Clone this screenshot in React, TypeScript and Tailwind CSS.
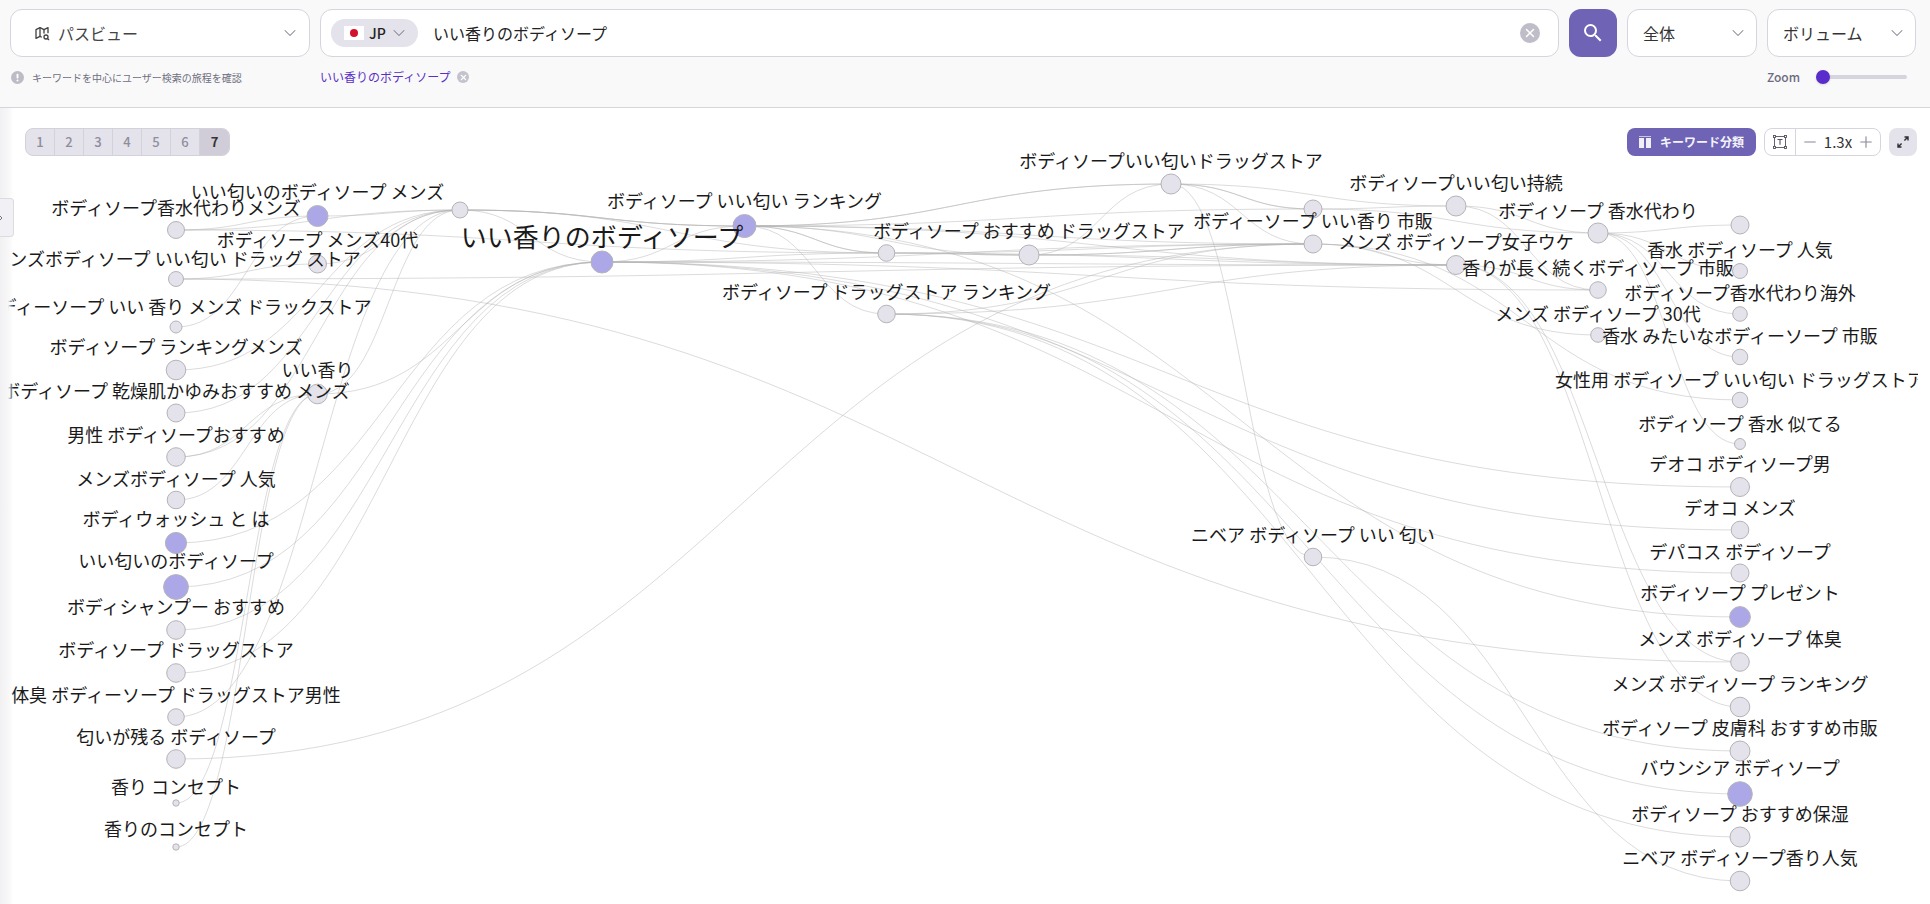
import { ChevronDown, ChevronRight, Minus, Plus, X } from 'lucide-react';
import { MdSearch } from 'react-icons/md';
import { TbMapSearch } from 'react-icons/tb';

type GraphNode = {
  id: string;
  x: number;
  y: number;
  r: number;
  label?: string;
  labelY?: number;
  hot?: boolean;
  main?: boolean;
};

const COL = [176, 317.5, 460, 602, 744.5, 886.5, 1029, 1171, 1313, 1456, 1598, 1740];

const nodes: GraphNode[] = [
  { id: 'l1', x: COL[0], y: 230, r: 8.5, label: 'ボディソープ香水代わりメンズ', labelY: 208 },
  { id: 'l2', x: COL[0], y: 279, r: 7.5, label: 'メンズボディソープ いい匂い ドラッグ ストア', labelY: 259 },
  { id: 'l3', x: COL[0], y: 327, r: 6, label: 'ボディーソープ いい 香り メンズ ドラックストア', labelY: 307 },
  { id: 'l4', x: COL[0], y: 370, r: 9.8, label: 'ボディソープ ランキングメンズ', labelY: 347 },
  { id: 'l5', x: COL[0], y: 413, r: 9, label: 'ボディソープ 乾燥肌かゆみおすすめ メンズ', labelY: 391 },
  { id: 'l6', x: COL[0], y: 457, r: 9.3, label: '男性 ボディソープおすすめ', labelY: 435 },
  { id: 'l7', x: COL[0], y: 500, r: 8.8, label: 'メンズボディソープ 人気', labelY: 479 },
  { id: 'l8', x: COL[0], y: 543, r: 10.6, label: 'ボディウォッシュ と は', labelY: 519, hot: true },
  { id: 'l9', x: COL[0], y: 587, r: 12.4, label: 'いい匂いのボディソープ', labelY: 561, hot: true },
  { id: 'l10', x: COL[0], y: 630, r: 9.3, label: 'ボディシャンプー おすすめ', labelY: 607 },
  { id: 'l11', x: COL[0], y: 673, r: 9.3, label: 'ボディソープ ドラッグストア', labelY: 650 },
  { id: 'l12', x: COL[0], y: 717, r: 8.3, label: '体臭 ボディーソープ ドラッグストア男性', labelY: 695 },
  { id: 'l13', x: COL[0], y: 759, r: 9.3, label: '匂いが残る ボディソープ', labelY: 737 },
  { id: 'l14', x: COL[0], y: 803, r: 3.2, label: '香り コンセプト', labelY: 787 },
  { id: 'l15', x: COL[0], y: 847, r: 3.2, label: '香りのコンセプト', labelY: 829 },
  { id: 'c1', x: COL[1], y: 216, r: 10.5, label: 'いい匂いのボディソープ メンズ', labelY: 192, hot: true },
  { id: 'c2', x: COL[1], y: 264, r: 9, label: 'ボディソープ メンズ40代', labelY: 240 },
  { id: 'c3', x: COL[1], y: 394, r: 9.8, label: 'いい香り', labelY: 370 },
  { id: 'x', x: COL[2], y: 210, r: 8 },
  { id: 'a', x: COL[3], y: 262, r: 11, label: 'いい香りのボディソープ', labelY: 236, hot: true, main: true },
  { id: 'b', x: COL[4], y: 226, r: 11.5, label: 'ボディソープ いい匂い ランキング', labelY: 201, hot: true },
  { id: 'p', x: COL[5], y: 253, r: 8.3 },
  { id: 'd', x: COL[5], y: 314, r: 8.8, label: 'ボディソープ ドラッグストア ランキング', labelY: 292 },
  { id: 'c', x: COL[6], y: 255, r: 10, label: 'ボディソープ おすすめ ドラッグストア', labelY: 231 },
  { id: 'e', x: COL[7], y: 184, r: 10, label: 'ボディソープいい匂いドラッグストア', labelY: 161 },
  { id: 'f', x: COL[8], y: 209, r: 9 },
  { id: 'g', x: COL[8], y: 244, r: 9, label: 'ボディーソープ いい香り 市販', labelY: 221 },
  { id: 'n', x: COL[8], y: 557, r: 8.8, label: 'ニベア ボディソープ いい 匂い', labelY: 535 },
  { id: 'i', x: COL[9], y: 206, r: 10, label: 'ボディソープいい匂い持続', labelY: 183 },
  { id: 'h', x: COL[9], y: 265, r: 9.5, label: 'メンズ ボディソープ女子ウケ', labelY: 242 },
  { id: 'j', x: COL[10], y: 233, r: 10, label: 'ボディソープ 香水代わり', labelY: 211 },
  { id: 'k', x: COL[10], y: 290, r: 8.3, label: '香りが長く続くボディソープ 市販', labelY: 268 },
  { id: 'm', x: COL[10], y: 335, r: 7.3, label: 'メンズ ボディソープ 30代', labelY: 314 },
  { id: 'r1', x: COL[11], y: 225, r: 9 },
  { id: 'r2', x: COL[11], y: 271, r: 7.5, label: '香水 ボディソープ 人気', labelY: 250 },
  { id: 'r3', x: COL[11], y: 314, r: 7.3, label: 'ボディソープ香水代わり海外', labelY: 293 },
  { id: 'r4', x: COL[11], y: 357, r: 7.8, label: '香水 みたいなボディーソープ 市販', labelY: 336 },
  { id: 'r5', x: COL[11], y: 400, r: 7.8, label: '女性用 ボディソープ いい匂い ドラッグストア', labelY: 380 },
  { id: 'r6', x: COL[11], y: 444, r: 5.5, label: 'ボディソープ 香水 似てる', labelY: 424 },
  { id: 'r7', x: COL[11], y: 487, r: 9.5, label: 'デオコ ボディソープ男', labelY: 464 },
  { id: 'r8', x: COL[11], y: 530, r: 8.8, label: 'デオコ メンズ', labelY: 508 },
  { id: 'r9', x: COL[11], y: 573, r: 9, label: 'デパコス ボディソープ', labelY: 552 },
  { id: 'r10', x: COL[11], y: 617, r: 10.4, label: 'ボディソープ プレゼント', labelY: 593, hot: true },
  { id: 'r11', x: COL[11], y: 662, r: 9.3, label: 'メンズ ボディソープ 体臭', labelY: 639 },
  { id: 'r12', x: COL[11], y: 707, r: 9.8, label: 'メンズ ボディソープ ランキング', labelY: 684 },
  { id: 'r13', x: COL[11], y: 751, r: 10, label: 'ボディソープ 皮膚科 おすすめ市販', labelY: 728 },
  { id: 'r14', x: COL[11], y: 794, r: 12.3, label: 'バウンシア ボディソープ', labelY: 768, hot: true },
  { id: 'r15', x: COL[11], y: 837, r: 10, label: 'ボディソープ おすすめ保湿', labelY: 814 },
  { id: 'r16', x: COL[11], y: 881, r: 9.8, label: 'ニベア ボディソープ香り人気', labelY: 858 },
];

const edges: [string, string][] = [
  ['l1', 'c1'], ['l1', 'p'], ['l1', 'x'],
  ['l2', 'c2'], ['l2', 'h'], ['l2', 'r11'],
  ['l3', 'c1'],
  ['l4', 'x'], ['l5', 'x'], ['l6', 'c3'], ['l7', 'c3'],
  ['l6', 'x'], ['l12', 'x'], ['l14', 'c3'], ['l15', 'c3'],
  ['l8', 'a'], ['l9', 'a'], ['l10', 'a'], ['l11', 'a'],
  ['l13', 'g'],
  ['c1', 'x'], ['c2', 'x'], ['c3', 'x'], ['c3', 'a'],
  ['x', 'a'], ['x', 'b'], ['x', 'b'], ['x', 'b'], ['x', 'p'],
  ['a', 'b'], ['a', 'p'], ['a', 'h'], ['a', 'k'], ['a', 'g'], ['a', 'r7'], ['a', 'r8'], ['a', 'r9'],
  ['b', 'e'], ['b', 'e'], ['b', 'p'], ['b', 'p'], ['b', 'c'], ['b', 'd'], ['b', 'g'], ['b', 'h'], ['b', 'f'], ['b', 'r10'],
  ['p', 'c'], ['p', 'c'], ['p', 'g'], ['p', 'h'],
  ['d', 'g'], ['d', 'h'], ['d', 'r13'], ['d', 'r14'], ['d', 'r15'],
  ['c', 'e'], ['c', 'g'], ['c', 'g'], ['c', 'h'],
  ['e', 'f'], ['e', 'f'], ['e', 'i'], ['e', 'g'], ['e', 'n'],
  ['f', 'i'], ['f', 'j'],
  ['g', 'h'], ['g', 'r5'], ['g', 'm'],
  ['i', 'j'], ['i', 'k'],
  ['h', 'k'], ['h', 'r11'], ['h', 'r12'],
  ['j', 'r1'], ['j', 'r2'], ['j', 'r3'], ['j', 'r4'], ['j', 'r6'],
  ['n', 'r16'],
];

const byId = Object.fromEntries(nodes.map((n) => [n.id, n]));

function linkPath(sourceId: string, targetId: string) {
  const s = byId[sourceId];
  const t = byId[targetId];
  const mid = (s.x + t.x) / 2;
  return `M${s.x},${s.y}C${mid},${s.y} ${mid},${t.y} ${t.x},${t.y}`;
}

function KeywordGraph() {
  return (
    <svg className="block h-[796px] w-[1910px]" viewBox="8 108 1910 796">
      <g fill="none" stroke="#b4b4b4" strokeWidth="0.6" strokeOpacity="0.8">
        {edges.map(([s, t], i) => (
          <path key={i} d={linkPath(s, t)} />
        ))}
      </g>
      {nodes.map((n) => (
        <circle
          key={n.id}
          cx={n.x}
          cy={n.y}
          r={n.r}
          fill={n.hot ? '#aca8e8' : '#e4e2ea'}
          stroke="#b4b4b8"
          strokeWidth="1"
        />
      ))}
      {nodes.map((n) =>
        n.label ? (
          <text
            key={n.id}
            x={n.x}
            y={(n.labelY ?? 0) - 1}
            textAnchor="middle"
            dominantBaseline="central"
            fill="#1a1a1a"
            fontSize={n.main ? 26 : 18}
          >
            {n.label}
          </text>
        ) : null,
      )}
    </svg>
  );
}

function SelectBox({ className, children }: { className: string; children: React.ReactNode }) {
  return (
    <div className={`flex h-12 items-center justify-between rounded-xl border border-[#d6d4df] bg-white ${className}`}>
      {children}
      <ChevronDown className="h-5 w-5 text-[#85838f]" strokeWidth={1.25} />
    </div>
  );
}

function InfoDot() {
  return (
    <svg className="h-[13px] w-[13px]" viewBox="0 0 14 14">
      <circle cx="7" cy="7" r="7" fill="#bdbbc6" />
      <rect x="6" y="3" width="2" height="5" rx="0.8" fill="#fff" />
      <circle cx="7" cy="10.2" r="1.1" fill="#fff" />
    </svg>
  );
}

function TextSizeIcon() {
  return (
    <svg className="h-[14px] w-[14px]" viewBox="0 0 14 14" fill="none" stroke="#55535f" strokeWidth="0.9">
      <rect x="1.5" y="1.5" width="11" height="11" />
      <rect x="0.5" y="0.5" width="2" height="2" fill="#fff" />
      <rect x="11.5" y="0.5" width="2" height="2" fill="#fff" />
      <rect x="0.5" y="11.5" width="2" height="2" fill="#fff" />
      <rect x="11.5" y="11.5" width="2" height="2" fill="#fff" />
      <path d="M4.5 4.5h5M7 4.5v5.2" strokeWidth="1.1" />
    </svg>
  );
}

function ColumnsIcon() {
  return (
    <svg className="h-3 w-3" viewBox="0 0 12 12">
      <rect x="0" y="0" width="12" height="1" fill="#c9c5e6" />
      <rect x="0" y="2" width="5" height="10" fill="#f0eff8" />
      <rect x="7" y="2" width="5" height="10" fill="#f0eff8" />
    </svg>
  );
}

function ExpandIcon() {
  return (
    <svg className="h-3 w-3" viewBox="0 0 12 12" fill="none" stroke="#2f2f35" strokeWidth="1.4">
      <path d="M7.5 1H11V4.5M11 1L7.4 4.6" />
      <path d="M4.5 11H1V7.5M1 11L4.6 7.4" />
    </svg>
  );
}

export default function App() {
  return (
    <div className="flex h-[904px] w-[1930px] flex-col overflow-hidden bg-white font-['Noto_Sans_CJK_JP','Noto_Sans',sans-serif] text-[#222]">
      <header className="h-[108px] shrink-0 border-b border-[#d6d5dc] bg-[#f9f9f9] pl-[10px] pr-[13px] pt-[9px]">
        <div className="flex gap-[10px]">
          <SelectBox className="w-[300px] pl-[23px] pr-[9px]">
            <div className="flex items-center gap-2 text-[#444]">
              <TbMapSearch className="h-4 w-4" />
              <span className="text-base">パスビュー</span>
            </div>
          </SelectBox>
          <div className="flex h-12 w-[1239px] items-center rounded-xl border border-[#d6d4df] bg-white pl-[10px] pr-[18px]">
            <div className="flex h-7 w-[87px] items-center rounded-full bg-[#e4e2ea] pl-[13px]">
              <div className="flex h-[14px] w-5 items-center justify-center bg-white">
                <div className="h-2 w-2 rounded-full bg-[#d3112c]" />
              </div>
              <span className="ml-[5px] text-sm font-medium text-[#222]">JP</span>
              <ChevronDown className="ml-[3px] h-5 w-5 text-[#85838f]" strokeWidth={1.25} />
            </div>
            <span className="ml-[15px] flex-1 text-base">いい香りのボディソープ</span>
            <div className="flex h-5 w-5 items-center justify-center rounded-full bg-[#bfbdc8]">
              <X className="h-[14px] w-[14px] text-white" strokeWidth={2.5} />
            </div>
          </div>
          <div className="flex h-12 w-12 items-center justify-center rounded-xl bg-[#6e63b5]">
            <MdSearch className="h-6 w-6 text-white" />
          </div>
          <SelectBox className="w-[130px] pl-[15px] pr-2">
            <span className="text-base text-[#333]">全体</span>
          </SelectBox>
          <SelectBox className="w-[149px] pl-[15px] pr-2">
            <span className="text-base text-[#333]">ボリューム</span>
          </SelectBox>
        </div>
        <div className="mt-[11px] flex h-[18px] items-center">
          <div className="flex w-[310px] items-center gap-2 pl-[1px]">
            <InfoDot />
            <span className="text-[10px] text-[#6f6f7f]">キーワードを中心にユーザー検索の旅程を確認</span>
          </div>
          <span className="text-xs text-[#5a2fc6]">いい香りのボディソープ</span>
          <div className="ml-[7px] flex h-3 w-3 items-center justify-center rounded-full bg-[#c4c2cc]">
            <X className="h-[9px] w-[9px] text-white" strokeWidth={3} />
          </div>
          <span className="ml-auto text-xs font-medium text-[#6e6b80]">Zoom</span>
          <div className="relative ml-[16px] mr-[10px] h-1 w-[91px] rounded-full bg-[#d6d4df]">
            <div className="absolute -top-[5px] left-0 h-[14px] w-[14px] rounded-full bg-[#5a2ccb] shadow" />
          </div>
        </div>
      </header>
      <div className="relative flex min-h-0 flex-1">
        <div className="w-[8px] shrink-0 bg-gradient-to-r from-[#f1f1f3] to-[#f7f7f8]" />
        <main className="relative min-w-0 flex-1 overflow-hidden">
          <KeywordGraph />
          <div className="absolute inset-y-0 left-0 w-[6px] bg-gradient-to-r from-[#f7f7f8] to-transparent" />
          <div className="absolute left-[17px] right-[13px] top-5 flex items-center">
            <div className="flex h-7 overflow-hidden rounded-lg border border-[#d3d1da] bg-[#e4e2ea] text-[13px] font-medium text-[#8f8d9d]">
              {['1', '2', '3', '4', '5', '6'].map((n) => (
                <div key={n} className="flex w-[29px] items-center justify-center border-r border-[#d3d1da]">
                  {n}
                </div>
              ))}
              <div className="flex w-[29px] items-center justify-center bg-[#d0cdd9] font-bold text-[#333]">7</div>
            </div>
            <div className="ml-auto flex h-7 w-[129px] items-center justify-center gap-[9px] rounded-lg bg-[#6e63b5] text-xs font-bold text-[#f4f3fa]">
              <ColumnsIcon />
              キーワード分類
            </div>
            <div className="ml-2 flex h-7 w-[117px] items-center rounded-lg border border-[#d6d4df] bg-white">
              <div className="flex h-full w-[31px] items-center justify-center border-r border-[#d6d4df]">
                <TextSizeIcon />
              </div>
              <div className="flex flex-1 items-center justify-between px-[5px] text-[15px] text-[#333]">
                <Minus className="h-[18px] w-[18px] text-[#8a8898]" strokeWidth={1.5} />
                1.3x
                <Plus className="h-[18px] w-[18px] text-[#8a8898]" strokeWidth={1.5} />
              </div>
            </div>
            <div className="ml-2 flex h-7 w-7 items-center justify-center rounded-lg bg-[#e4e2ea]">
              <ExpandIcon />
            </div>
          </div>
        </main>
        <div className="absolute left-0 top-[90px] flex h-[39px] w-[14px] items-center overflow-hidden rounded-r border border-l-0 border-[#dcdbe2] bg-[#f1f0f4]">
          <ChevronRight className="-ml-2 h-4 w-4 shrink-0 text-[#777]" strokeWidth={1.5} />
        </div>
      </div>
    </div>
  );
}
